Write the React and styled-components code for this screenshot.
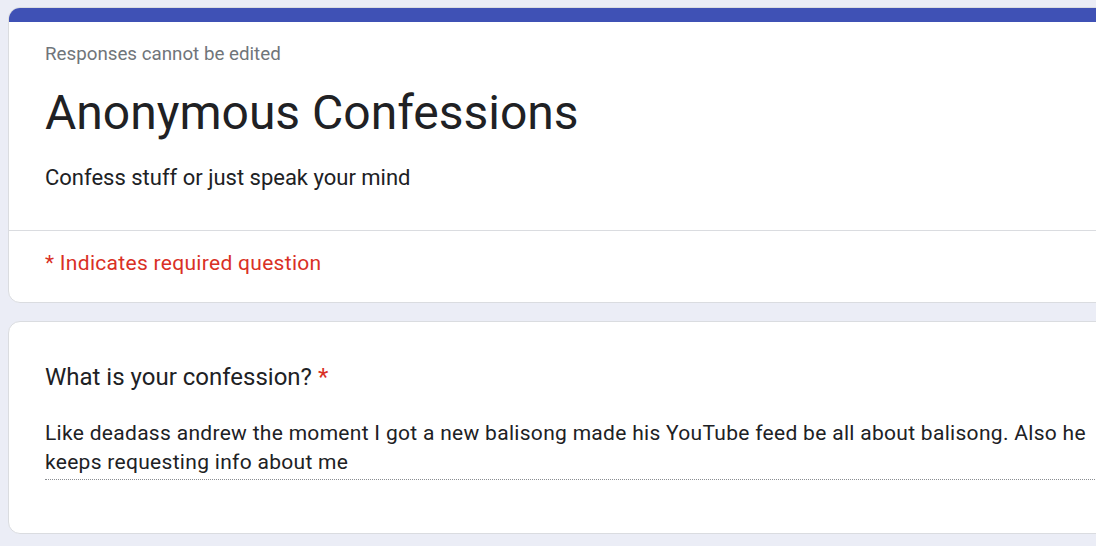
import React from "react";
import styled, { createGlobalStyle } from "styled-components";

const GlobalStyle = createGlobalStyle`
  html, body {
    margin: 0;
    padding: 0;
    background: #ebedf6;
    font-family: Roboto, "Liberation Sans", Arial, sans-serif;
    overflow: hidden;
  }
`;

const App = () => {
  return (
    <Page>
      <GlobalStyle />
      <Card>
        <TopBar />
        <Header>
          <Note>Responses cannot be edited</Note>
          <Title>Anonymous Confessions</Title>
          <Description>Confess stuff or just speak your mind</Description>
        </Header>
        <Divider />
        <Required>* Indicates required question</Required>
      </Card>
      <Card>
        <Question>
          <QuestionTitle>
            What is your confession? <Star>*</Star>
          </QuestionTitle>
          <Answer>
            Like deadass andrew the moment I got a new balisong made his YouTube
            feed be all about balisong. Also he keeps requesting info about me
          </Answer>
        </Question>
      </Card>
    </Page>
  );
};

export default App;

const Page = styled.div`
  width: 1130px;
  padding: 7px 0 0 8px;
  display: flex;
  flex-direction: column;
  gap: 18px;
`;

const Card = styled.div`
  background: #fff;
  border: 1px solid #dadce0;
  border-radius: 12px;
  overflow: hidden;
`;

const TopBar = styled.div`
  height: 15px;
  background: #3f51b5;
  margin: -1px -1px 0;
`;

const Header = styled.div`
  padding: 20px 36px 38px;
`;

const Note = styled.div`
  font-size: 18.75px;
  color: #70757a;
  line-height: 24px;
`;

const Title = styled.div`
  font-size: 48px;
  color: #202124;
  line-height: 64px;
  margin-top: 15px;
`;

const Description = styled.div`
  font-size: 22px;
  color: #202124;
  line-height: 28px;
  margin-top: 19px;
`;

const Divider = styled.div`
  height: 1px;
  background: #dadce0;
`;

const Required = styled.div`
  padding: 18px 36px 25px;
  font-size: 21px;
  line-height: 28px;
  letter-spacing: 0.3px;
  color: #d93025;
`;

const Question = styled.div`
  padding: 39px 36px 53px;
`;

const QuestionTitle = styled.div`
  font-size: 24px;
  line-height: 32px;
  color: #202124;
`;

const Star = styled.span`
  color: #d93025;
`;

const Answer = styled.div`
  margin-top: 26px;
  width: 1060px;
  font-size: 21px;
  line-height: 29px;
  color: #202124;
  letter-spacing: 0.3px;
  border-bottom: 1px dotted #8a8d91;
  padding-bottom: 2px;
`;
